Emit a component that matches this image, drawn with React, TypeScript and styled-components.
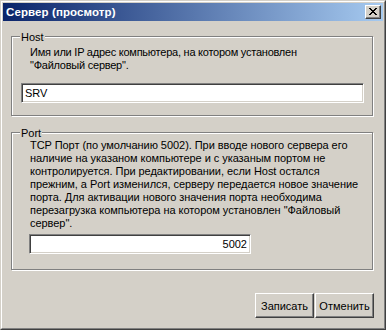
import styled, { createGlobalStyle } from "styled-components";

const Global = createGlobalStyle`
  html, body {
    margin: 0;
    padding: 0;
    background: #d4d0c8;
  }
  body {
    font-family: "Liberation Sans", Arial, sans-serif;
    font-size: 11px;
    color: #000;
  }
`;

const Window = styled.div`
  box-sizing: border-box;
  width: 386px;
  height: 330px;
  background: #d4d0c8;
  border: 1px solid;
  border-color: #d4d0c8 #404040 #404040 #d4d0c8;
  display: flex;
  flex-direction: column;
`;

const Frame = styled.div`
  flex: 1;
  display: flex;
  flex-direction: column;
  border: 1px solid;
  border-color: #fff #808080 #808080 #fff;
  padding: 1px;
`;

const TitleBar = styled.div`
  height: 18px;
  display: flex;
  align-items: center;
  justify-content: space-between;
  padding: 0 2px 0 3px;
  background: linear-gradient(to right, #0a246a, #a6caf0);
`;

const Title = styled.span`
  color: #fff;
  font-weight: bold;
  font-size: 11.5px;
  letter-spacing: 0.1px;
`;

const CloseBtn = styled.div`
  box-sizing: border-box;
  width: 16px;
  height: 14px;
  background: #d4d0c8;
  border: 1px solid;
  border-color: #fff #404040 #404040 #fff;
  box-shadow: inset -1px -1px 0 #808080;
  display: flex;
  align-items: center;
  justify-content: center;
  padding: 0 1px 1px 0;
`;

const Body = styled.div`
  flex: 1;
  display: flex;
  flex-direction: column;
  padding: 0 9px 0 8px;
`;

const Group = styled.div<{ $top: number; $h: number; $pad: number }>`
  position: relative;
  box-sizing: border-box;
  margin-top: ${(p) => p.$top}px;
  height: ${(p) => p.$h}px;
  margin-right: 1px;
  border: 1px solid #808080;
  box-shadow: inset 1px 1px 0 #fff, 1px 1px 0 #fff;
  padding: ${(p) => p.$pad}px 0 0 18px;
  display: flex;
  flex-direction: column;
`;

const Legend = styled.span`
  position: absolute;
  top: -5px;
  left: 8px;
  padding: 0 1px 0 1px;
  background: #d4d0c8;
  line-height: 11px;
`;

const Note = styled.div<{ $spacing: number }>`
  line-height: 13px;
  white-space: pre;
  letter-spacing: ${(p) => p.$spacing}px;
`;

const Field = styled.div<{ $w: number; $left: number; $top: number; $right?: boolean }>`
  box-sizing: border-box;
  width: ${(p) => p.$w}px;
  height: 20px;
  margin-left: ${(p) => p.$left}px;
  margin-top: ${(p) => p.$top}px;
  background: #fff;
  border: 1px solid;
  border-color: #808080 #fff #fff #808080;
  box-shadow: inset 1px 1px 0 #404040, inset -1px -1px 0 #d4d0c8;
  padding: 0 3px;
  display: flex;
  align-items: center;
  justify-content: ${(p) => (p.$right ? "flex-end" : "flex-start")};
  line-height: 13px;
`;

const Buttons = styled.div`
  margin-top: 23px;
  display: flex;
  justify-content: flex-end;
  gap: 1px;
`;

const Button = styled.div`
  box-sizing: border-box;
  width: 59px;
  height: 25px;
  border: 1px solid;
  border-color: #fff #404040 #404040 #fff;
  box-shadow: inset -1px -1px 0 #808080;
  display: flex;
  align-items: center;
  justify-content: center;
`;

function App() {
  return (
    <Window>
      <Global />
      <Frame>
        <TitleBar>
          <Title>Сервер (просмотр)</Title>
          <CloseBtn>
            <svg width="8" height="7" viewBox="0 0 8 7">
              <path d="M0 0h2v1H0zM6 0h2v1H6zM1 1h2v1H1zM5 1h2v1H5zM2 2h4v1H2zM3 3h2v1H3zM2 4h4v1H2zM1 5h2v1H1zM5 5h2v1H5zM0 6h2v1H0zM6 6h2v1H6z" fill="#000" />
            </svg>
          </CloseBtn>
        </TitleBar>
        <Body>
          <Group $top={15} $h={80} $pad={9}>
            <Legend>Host</Legend>
            <Note $spacing={-0.24}>
              {"Имя или IP адрес компьютера, на котором установлен\n\"Файловый сервер\"."}
            </Note>
            <Field $w={343} $left={-9} $top={11}>SRV</Field>
          </Group>
          <Group $top={16} $h={138} $pad={6}>
            <Legend>Port</Legend>
            <Note $spacing={-0.05}>
              {"TCP Порт (по умолчанию 5002). При вводе нового сервера его\nналичие на указаном компьютере и с указаным портом не\nконтролируется. При редактировании, если Host остался\nпрежним, а Port изменился, серверу передается новое значение\nпорта. Для активации нового значения порта необходима\nперезагрузка компьютера на котором установлен \"Файловый\nсервер\"."}
            </Note>
            <Field $w={222} $left={-1} $top={4} $right>5002</Field>
          </Group>
          <Buttons>
            <Button>Записать</Button>
            <Button>Отменить</Button>
          </Buttons>
        </Body>
      </Frame>
    </Window>
  );
}

export default App;
